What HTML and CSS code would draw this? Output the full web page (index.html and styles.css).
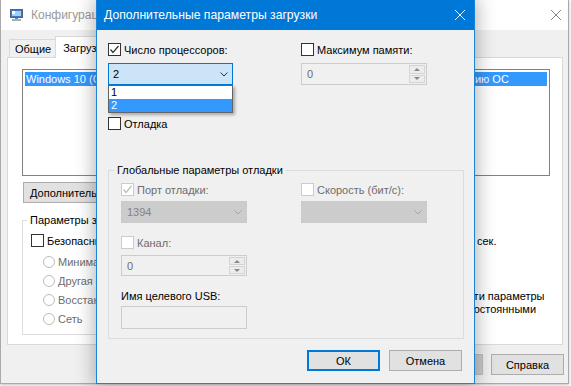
FILE: index.html
```html
<!DOCTYPE html>
<html lang="ru">
<head>
  <meta charset="UTF-8">
  <title>Дополнительные параметры загрузки</title>
  <link rel="stylesheet" href="styles.css">
</head>
<body>
  <div class="desk">
    <!-- окно "Конфигурация системы" (неактивное, на заднем плане) -->
    <div class="main-win">
      <div class="main-title">
        <svg class="app-icon" width="13" height="12" viewBox="0 0 13 12">
          <rect x="0.5" y="0.5" width="12" height="8" fill="#3f78c4" stroke="#56657a"/>
          <rect x="2" y="2" width="9" height="5" fill="#9fd0f6"/>
          <rect x="2" y="2" width="3" height="3" fill="#fff"/>
          <rect x="5" y="9" width="3" height="1" fill="#7a8797"/>
          <rect x="2" y="10" width="9" height="2" fill="#a3afbd"/>
        </svg>
        <span>Конфигурация системы</span>
        <svg class="main-close" width="10" height="10" viewBox="0 0 10 10">
          <path d="M0 0L10 10M10 0L0 10"/>
        </svg>
      </div>
      <div class="main-body">
        <div class="tabs">
          <div class="tab">Общие</div>
          <div class="tab active">Загрузка</div>
          <div class="tab">Службы</div>
          <div class="tab">Автозагрузка</div>
          <div class="tab">Сервис</div>
        </div>
        <div class="tab-panel">
          <div class="os-list">
            <div class="os-item">Windows 10 (C:\WINDOWS) : Текущая операционная система; Загружаемая по умолчанию ОС</div>
          </div>
          <div class="list-buttons">
            <button class="btn wide">Дополнительные параметры...</button>
            <button class="btn wide">Использовать по умолчанию</button>
            <button class="btn">Удалить</button>
          </div>
          <div class="boot-row">
            <fieldset class="boot-group">
              <legend>Параметры загрузки</legend>
              <div class="boot-inner">
                <label class="check"><span class="box"></span>Безопасный режим</label>
                <div class="radio off"><span class="circle"></span>Минимальная</div>
                <div class="radio off"><span class="circle"></span>Другая оболочка</div>
                <div class="radio off"><span class="circle"></span>Восстановление Active Directory</div>
                <div class="radio off"><span class="circle"></span>Сеть</div>
              </div>
            </fieldset>
            <div class="timeout">
              <div class="field-label">Таймаут:</div>
              <div class="timeout-row">
                <div class="text-field num">30</div>
                <span>сек.</span>
              </div>
              <label class="check multi"><span class="box"></span><span>Сделать эти параметры загрузки постоянными</span></label>
            </div>
          </div>
        </div>
        <div class="main-buttons">
          <button class="btn">ОК</button>
          <button class="btn">Отмена</button>
          <button class="btn off">Применить</button>
          <button class="btn">Справка</button>
        </div>
      </div>
    </div>

    <!-- диалог поверх окна -->
    <div class="dlg">
      <div class="dlg-title">
        <span>Дополнительные параметры загрузки</span>
        <svg class="dlg-close" width="10" height="10" viewBox="0 0 10 10">
          <path d="M0 0L10 10M10 0L0 10"/>
        </svg>
      </div>
      <div class="dlg-body">
        <div class="dlg-cols">
          <div class="col">
            <label class="check">
              <span class="box"><svg width="11" height="11" viewBox="0 0 11 11"><path d="M1.5 5.5L4 8.5L9.5 2"/></svg></span>
              Число процессоров:
            </label>
            <div class="combo open">
              <span>2</span>
              <svg class="chev" width="8" height="5" viewBox="0 0 8 5"><path d="M0.5 0.5L4 4L7.5 0.5"/></svg>
              <ul class="drop-list">
                <li>1</li>
                <li class="sel">2</li>
              </ul>
            </div>
            <label class="check gap-debug"><span class="box"></span>Отладка</label>
          </div>
          <div class="col">
            <label class="check"><span class="box"></span>Максимум памяти:</label>
            <div class="spin off">
              <span>0</span>
              <div class="spin-btns">
                <span class="arr up"></span>
                <span class="arr down"></span>
              </div>
            </div>
          </div>
        </div>

        <fieldset class="debug-group">
          <legend>Глобальные параметры отладки</legend>
          <div class="grp-grid">
            <div class="col">
              <label class="check off">
                <span class="box"><svg width="11" height="11" viewBox="0 0 11 11"><path d="M1.5 5.5L4 8.5L9.5 2"/></svg></span>
                Порт отладки:
              </label>
              <div class="combo off">
                <span>1394</span>
                <svg class="chev" width="8" height="5" viewBox="0 0 8 5"><path d="M0.5 0.5L4 4L7.5 0.5"/></svg>
              </div>
              <label class="check off gap-chan"><span class="box"></span>Канал:</label>
              <div class="spin off small">
                <span>0</span>
                <div class="spin-btns">
                  <span class="arr up"></span>
                  <span class="arr down"></span>
                </div>
              </div>
              <div class="field-label usb">Имя целевого USB:</div>
              <div class="text-field"></div>
            </div>
            <div class="col">
              <label class="check off"><span class="box"></span>Скорость (бит/с):</label>
              <div class="combo off">
                <span></span>
                <svg class="chev" width="8" height="5" viewBox="0 0 8 5"><path d="M0.5 0.5L4 4L7.5 0.5"/></svg>
              </div>
            </div>
          </div>
        </fieldset>

        <div class="dlg-buttons">
          <button class="btn default">ОК</button>
          <button class="btn">Отмена</button>
        </div>
      </div>
    </div>
  </div>
</body>
</html>
```

FILE: styles.css
```css
body {
  margin: 0;
  background: #fff;
  font-family: "Segoe UI", "Liberation Sans", sans-serif;
  font-size: 11px;
  color: #000;
}

.desk {
  position: relative;
  width: 571px;
  height: 386px;
  overflow: hidden;
}

/* ---------- окно на заднем плане ---------- */

.main-win {
  position: absolute;
  z-index: 0;
  left: 0;
  top: 0;
  width: 569px;
  height: 384px;
  box-sizing: border-box;
  background: #f0f0f0;
  border: 1px solid #aaaaaa;
  border-top: 0;
  box-shadow: 0 1px 3px rgba(0, 0, 0, 0.25);
}

.main-title {
  height: 30px;
  background: #fff;
  display: flex;
  align-items: center;
  padding: 0 7px 0 9px;
  color: #999;
  font-size: 12px;
}

.app-icon {
  margin-right: 8px;
}

.main-close {
  margin-left: auto;
  stroke: #888;
  stroke-width: 1;
}

.main-body {
  padding: 6px 4px 0 6px;
}

.tabs {
  display: flex;
  align-items: flex-end;
  height: 21px;
  padding-left: 2px;
}

.tab {
  height: 18px;
  box-sizing: border-box;
  border: 1px solid #d9d9d9;
  border-bottom: 0;
  padding: 0 5px;
  display: flex;
  align-items: center;
  background: #f0f0f0;
}

.tab.active {
  height: 22px;
  margin: 0 -2px -1px;
  padding: 0 7px;
  background: #fff;
  position: relative;
  z-index: 1;
}

.tab-panel {
  height: 288px;
  box-sizing: border-box;
  margin-right: 1px;
  background: #fff;
  border: 1px solid #d9d9d9;
  padding: 11px 12px 0 14px;
}

.os-list {
  height: 107px;
  box-sizing: border-box;
  border: 1px solid #828282;
  padding: 2px;
}

.os-item {
  height: 14px;
  line-height: 14px;
  padding-left: 1px;
  background: #3399ff;
  color: #fff;
  white-space: nowrap;
  overflow: hidden;
}

.list-buttons {
  display: flex;
  gap: 8px;
  margin: 6px 0 0 1px;
}

.btn {
  width: 73px;
  height: 21px;
  padding: 0;
  box-sizing: border-box;
  background: #e1e1e1;
  border: 1px solid #adadad;
  font: inherit;
  color: #000;
  white-space: nowrap;
}

.btn.wide {
  width: 172px;
  text-align: left;
  padding-left: 6px;
}

.btn.off {
  background: #cccccc;
  border-color: #bfbfbf;
  color: #838383;
}

.btn.default {
  border: 2px solid #0078d7;
}

.boot-row {
  display: flex;
  margin-top: 10px;
}

.boot-group {
  width: 300px;
  margin: 0;
  padding: 0;
  box-sizing: border-box;
  border: 1px solid #dcdcdc;
  min-width: 0;
}

.boot-group legend,
.debug-group legend {
  margin-left: 4px;
  padding: 0 3px;
  line-height: 14px;
}

.boot-inner {
  padding: 6px 0 6px 8px;
}

.radio {
  display: flex;
  align-items: center;
  height: 19px;
  margin-left: 12px;
}

.boot-inner .radio:first-of-type {
  margin-top: 4px;
}

.circle {
  width: 12px;
  height: 12px;
  box-sizing: border-box;
  border: 1px solid #bcbcbc;
  border-radius: 50%;
  background: #fff;
  margin-right: 3px;
}

.radio.off {
  color: #6d6d6d;
}

.timeout {
  margin-left: 84px;
  width: 143px;
}

.timeout-row {
  display: flex;
  align-items: center;
  gap: 7px;
  margin-top: 2px;
}

.timeout-row .text-field {
  width: 64px;
  height: 21px;
  margin: 0;
  background: #fff;
  border-color: #7a7a7a;
}

.check.multi {
  height: auto;
  align-items: flex-start;
  margin-top: 39px;
  line-height: 13px;
}

.check.multi .box {
  margin-top: 0;
  flex: none;
}

.main-buttons {
  display: flex;
  justify-content: flex-end;
  gap: 8px;
  margin-top: 9px;
}

/* ---------- диалог ---------- */

.dlg {
  position: absolute;
  z-index: 2;
  left: 96px;
  top: 0;
  width: 379px;
  height: 384px;
  box-sizing: border-box;
  background: #f0f0f0;
  border: 1px solid #1883d7;
  border-top: 0;
  box-shadow: 0 0 18px 2px rgba(0, 0, 0, 0.3);
}

.dlg-title {
  height: 30px;
  background: #0078d7;
  color: #fff;
  font-size: 12.2px;
  display: flex;
  align-items: center;
  padding: 0 9px 0 7px;
}

.dlg-close {
  margin-left: auto;
  stroke: #fff;
  stroke-width: 1;
}

.dlg-body {
  padding: 0 10px 0 11px;
}

.dlg-cols {
  display: grid;
  grid-template-columns: 193px 1fr;
  margin-top: 12px;
}

.col {
  display: flex;
  flex-direction: column;
  align-items: flex-start;
}

.check {
  display: flex;
  align-items: center;
  height: 15px;
}

.box {
  width: 13px;
  height: 13px;
  flex: none;
  box-sizing: border-box;
  border: 1px solid #333;
  background: #fff;
  margin-right: 3px;
  display: flex;
  align-items: center;
  justify-content: center;
}

.box svg {
  fill: none;
  stroke: #333;
  stroke-width: 1.2;
}

.check.off {
  color: #6d6d6d;
}

.check.off .box {
  border-color: #cccccc;
}

.check.off .box svg {
  stroke: #bcbcbc;
}

.gap-debug {
  margin-top: 31px;
}

.combo {
  position: relative;
  width: 125px;
  height: 22px;
  box-sizing: border-box;
  margin-top: 6px;
  display: flex;
  align-items: center;
  justify-content: space-between;
  padding: 0 4px 0 4px;
  border: 1px solid #0078d7;
  background: #cce4f7;
}

.chev {
  fill: none;
  stroke: #333;
  stroke-width: 1;
}

.combo.off {
  width: 126px;
  margin-top: 4px;
  border-color: #cccccc;
  background: #cccccc;
  color: #838383;
  padding-left: 5px;
}

.combo.off .chev {
  stroke: #a6a6a6;
}

.drop-list {
  position: absolute;
  left: -1px;
  top: 21px;
  width: 125px;
  margin: 0;
  padding: 0;
  list-style: none;
  box-sizing: border-box;
  border: 1px solid #646464;
  background: #fff;
  box-shadow: 2px 2px 3px rgba(0, 0, 0, 0.3);
}

.drop-list li {
  height: 13px;
  line-height: 13px;
  padding-left: 2px;
}

.drop-list li.sel {
  background: #3399ff;
  color: #fff;
}

.spin {
  width: 126px;
  height: 22px;
  box-sizing: border-box;
  margin-top: 6px;
  border: 1px solid #cccccc;
  display: flex;
  align-items: center;
  justify-content: space-between;
  padding-left: 5px;
  color: #6d6d6d;
}

.spin.small {
  height: 21px;
  margin-top: 5px;
}

.spin-btns {
  display: flex;
  flex-direction: column;
  gap: 1px;
  width: 17px;
  height: 100%;
  box-sizing: border-box;
  padding: 1px 1px 1px 0;
}

.arr {
  flex: 1;
  border: 1px solid #d4d4d4;
  background: #ececec;
  display: flex;
  align-items: center;
  justify-content: center;
}

.arr::after {
  content: "";
  border-left: 3px solid transparent;
  border-right: 3px solid transparent;
}

.arr.up::after {
  border-bottom: 3px solid #888;
}

.arr.down::after {
  border-top: 3px solid #888;
}

.debug-group {
  width: 356px;
  margin: 32px 0 0;
  padding: 0;
  box-sizing: border-box;
  border: 1px solid #dcdcdc;
  min-width: 0;
}

.debug-group legend {
  margin-left: 5px;
}

.grp-grid {
  display: grid;
  grid-template-columns: 180px 1fr;
  padding: 5px 0 9px 12px;
}

.gap-chan {
  margin-top: 12px;
}

.field-label {
  height: 15px;
  line-height: 15px;
}

.field-label.usb {
  margin-top: 13px;
}

.text-field {
  width: 126px;
  height: 23px;
  box-sizing: border-box;
  margin-top: 2px;
  border: 1px solid #cccccc;
  background: #f0f0f0;
}

.text-field.num {
  padding: 3px 0 0 4px;
}

.dlg-buttons {
  display: flex;
  justify-content: flex-end;
  gap: 9px;
  margin: 11px 2px 0 0;
}
```
